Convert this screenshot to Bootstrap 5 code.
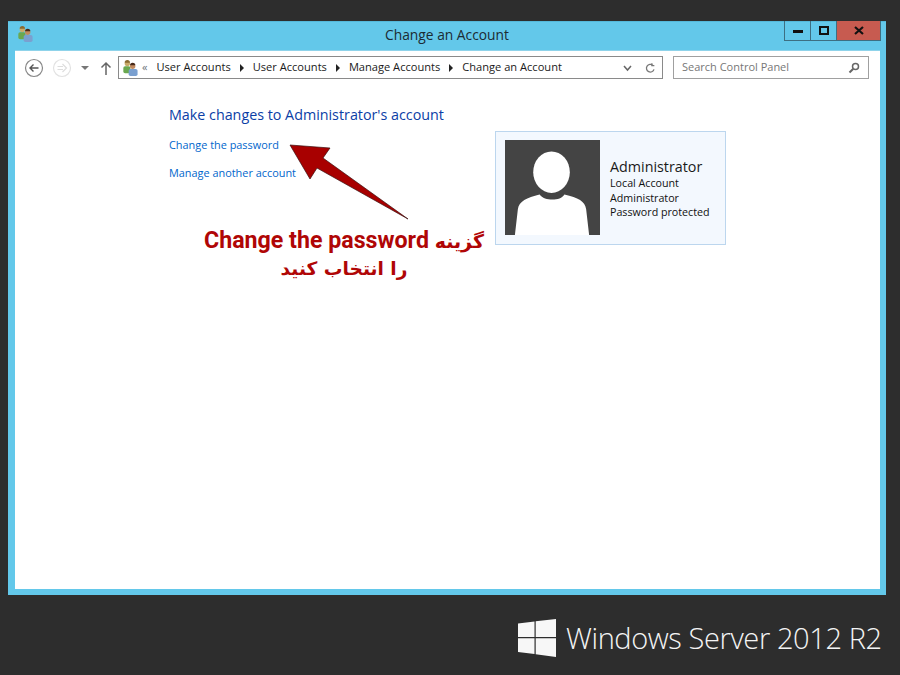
<!DOCTYPE html>
<html lang="en">
<head>
<meta charset="utf-8">
<title>Change an Account</title>
<link href="https://cdn.jsdelivr.net/npm/bootstrap@5.3.0/dist/css/bootstrap.min.css" rel="stylesheet">
<style>
html,body{height:675px;overflow:hidden}
body{background:#2d2d2d;font-family:"Open Sans","Noto Sans",sans-serif;color:#1a1a1a;padding:21px 14px 0 8px}
.win-frame{height:574px;background:#63c8ea;padding:0 6px 6px 7px;position:relative;border-top:1px solid #55b8da}
.title-row{height:28px;position:relative}
.title-text{font-size:13.8px;line-height:26.5px;color:#1c2b33;padding-right:1px}
.title-ico{position:absolute;left:2px;top:4px}
.win-btns{position:absolute;right:-1px;top:-1px;height:20px;border:1px solid #3d6f82;border-top:0}
.wbtn{width:26px;height:19px;border-right:1px solid #3d6f82}
.wbtn-x{width:43px;background:#c75b50;border-right:0}
.client{height:539px;background:#fff;position:relative;border-top:1px solid #8fd3ea}
.toolbar{padding:0 11px 0 9px;height:33px}
.nav-ico{width:20px;height:20px}
.up-ico{margin-left:9px}
.addr{height:23px;width:545px;margin-left:5px;border:1px solid #8a8a8a;font-size:11.1px;padding:0 6px 0 3px;white-space:nowrap}
.crumb-lead{margin-right:1px}
.crumb-first{margin-left:8px}
.crumb-sep{width:0;height:0;border-left:4px solid #222;border-top:4px solid transparent;border-bottom:4px solid transparent;margin:0 9px 0 9px}
.crumb-refresh{margin-left:13px}
.search{height:23px;width:196px;margin-left:10px;border:1px solid #a0a0a0;font-size:11px;color:#777;padding:0 8px 0 8px}
.main-pane{padding:21px 0 0 154px}
.left-col{width:326px}
.head-link{font-size:14.3px;line-height:20px;color:#0b3ea6;white-space:nowrap}
.task-link{display:block;font-size:10.9px;line-height:16px;color:#0066cc;text-decoration:none;white-space:nowrap}
.tl1{margin-top:12px}
.tl2{margin-top:12px}
.acct{width:231px;height:114px;margin-top:26px;background:#f3f8fe;border:1px solid #bcd6ee;padding:8px 9px;gap:10px}
.avatar{width:95px;height:95px;flex:none;display:block}
.acct-name{font-size:14.3px;line-height:18px;color:#1a1a1a;margin-top:18px}
.acct-line{font-size:10.7px;line-height:14.5px;color:#111;white-space:nowrap}
.arrow-ov{position:absolute;left:274px;top:93px}
.note{position:absolute;left:179px;top:174px;width:300px;text-align:center;color:#b00606;font-family:Roboto,"DejaVu Sans",sans-serif;font-weight:700;font-size:23.2px;line-height:30px}
.fa-txt{font-family:"DejaVu Sans",sans-serif;font-size:19px}
.fa-line{font-family:"DejaVu Sans",sans-serif;font-size:18.6px;margin-top:-2px}
.brand{height:80px;padding:6px 0 0 510px;margin-right:-10px;color:#f4f4f4}
.brand-txt{font-family:"Open Sans",sans-serif;font-weight:300;font-size:29px;letter-spacing:-.4px;white-space:nowrap;margin-left:10px}
</style>
</head>
<body>
<div class="win-frame">
  <div class="title-row text-center">
    <svg class="title-ico" width="16" height="16" viewBox="0 0 18 18"><circle cx="6" cy="4" r="3" fill="#c9ab6a"/><path d="M3 3a3 3 0 0 1 6 0z" fill="#8a6a30"/><rect x="1.500" y="7" width="8" height="8" rx="2" fill="#6aa84f"/><circle cx="12" cy="7" r="3" fill="#c08a60"/><path d="M9 6a3 3 0 0 1 6 0z" fill="#4a2a18"/><rect x="7.500" y="10" width="10" height="8" rx="2" fill="#7aa0d0"/></svg>
    <div class="title-text">Change an Account</div>
    <div class="win-btns d-flex">
      <div class="wbtn d-flex align-items-center justify-content-center"><svg width="10" height="4"><rect width="10" height="3" y="1" fill="#111"/></svg></div>
      <div class="wbtn d-flex align-items-center justify-content-center"><svg width="10" height="9"><rect x="1" y="1" width="8" height="7" fill="none" stroke="#111" stroke-width="2"/></svg></div>
      <div class="wbtn wbtn-x d-flex align-items-center justify-content-center"><svg width="10" height="9"><path d="M1 1l8 7M9 1l-8 7" stroke="#111" stroke-width="2.2"/></svg></div>
    </div>
  </div>
  <div class="client">
    <div class="toolbar d-flex align-items-center">
      <svg class="nav-ico" viewBox="0 0 20 20"><circle cx="10" cy="10" r="8.500" fill="#fff" stroke="#888" stroke-width="1.2"/><path d="M14.500 10H6M9.500 6.500 6 10l3.500 3.500" fill="none" stroke="#555" stroke-width="1.4"/></svg>
      <svg class="nav-ico ms-2" viewBox="0 0 20 20"><circle cx="10" cy="10" r="8.500" fill="#fff" stroke="#e2e2e2" stroke-width="1.2"/><path d="M5.500 8.500H11M5.500 11.500H11M10.500 6 14.500 10l-4 4" fill="none" stroke="#ddd" stroke-width="1.2"/></svg>
      <svg class="ms-2" width="10" height="6" viewBox="0 0 10 6"><path d="M1 1h8L5 5z" fill="#777"/></svg>
      <svg class="up-ico" width="14" height="16" viewBox="0 0 14 16"><path d="M7 15V3M2.500 7.500 7 3l4.500 4.500" fill="none" stroke="#666" stroke-width="1.5"/></svg>
      <div class="addr d-flex align-items-center">
        <svg width="16" height="16" viewBox="0 0 18 18"><circle cx="6" cy="4" r="3" fill="#c9ab6a"/><path d="M3 3a3 3 0 0 1 6 0z" fill="#8a6a30"/><rect x="1.500" y="7" width="8" height="8" rx="2" fill="#6aa84f"/><circle cx="12" cy="7" r="3" fill="#c08a60"/><path d="M9 6a3 3 0 0 1 6 0z" fill="#4a2a18"/><rect x="7.500" y="10" width="10" height="8" rx="2" fill="#7aa0d0"/></svg>
        <span class="ms-1 text-secondary crumb-lead">«</span>
        <span class="crumb-first">User Accounts</span><i class="crumb-sep"></i><span>User Accounts</span><i class="crumb-sep"></i><span>Manage Accounts</span><i class="crumb-sep"></i><span>Change an Account</span>
        <svg class="ms-auto" width="9" height="8" viewBox="0 0 9 8"><path d="M1 2l3.500 4L8 2" fill="none" stroke="#666" stroke-width="1.5"/></svg>
        <svg class="crumb-refresh" width="11" height="12" viewBox="0 0 12 12"><path d="M9.800 7.500A4.200 4.200 0 1 1 8.500 3M7.500 .8V3.500H10.200" fill="none" stroke="#777" stroke-width="1.4"/></svg>
      </div>
      <div class="search d-flex align-items-center justify-content-between">
        <span>Search Control Panel</span>
        <svg width="12" height="12" viewBox="0 0 12 12"><circle cx="7.500" cy="4.500" r="3" fill="none" stroke="#666" stroke-width="1.500"/><path d="M5.300 6.700 1.500 10.500" stroke="#666" stroke-width="2"/></svg>
      </div>
    </div>
    <div class="main-pane d-flex">
      <div class="left-col">
        <div class="head-link">Make changes to Administrator's account</div>
        <a class="task-link tl1" href="#">Change the password</a>
        <a class="task-link tl2" href="#">Manage another account</a>
      </div>
      <div class="acct d-flex">
        <svg class="avatar" viewBox="0 0 96 96"><rect width="96" height="96" fill="#444"/><path d="M10 96H85L82 70C81 62 74 58 60 55 56 62 40 62 35 55 22 58 14 62 13 70z" fill="#fff"/><ellipse cx="47" cy="32.500" rx="18.500" ry="21" fill="#fff"/></svg>
        <div>
          <div class="acct-name">Administrator</div>
          <div class="acct-line">Local Account</div>
          <div class="acct-line">Administrator</div>
          <div class="acct-line">Password protected</div>
        </div>
      </div>
    </div>
    <svg class="arrow-ov" width="122" height="78" viewBox="0 0 122 78"><path d="M1 1 41 4 34 14 119 75 28 24 21 35z" fill="#a80000" stroke="#3a1010" stroke-width=".7"/></svg>
    <div class="note"><div dir="rtl"><span class="fa-txt">گزینه</span> Change the password</div><div dir="rtl" class="fa-line">را انتخاب کنید</div></div>
  </div>
</div>
<div class="brand d-flex align-items-center">
  <svg width="38" height="38" viewBox="0 0 38 38"><path d="M0 4.500 16.500 2.500V18H0zM17.700 2.300 38 0V18H17.700zM0 19.300H16.500V35L0 33zM17.700 19.300H38V38L17.700 35.200z" fill="#f7f7f7"/></svg>
  <span class="brand-txt">Windows Server 2012 R2</span>
</div>
</body>
</html>
